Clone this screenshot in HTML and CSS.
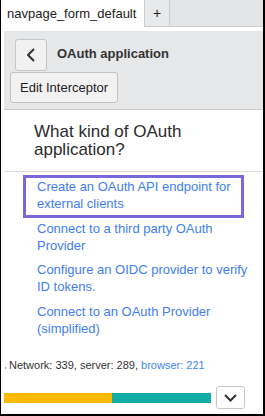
FILE: index.html
```html
<!DOCTYPE html>
<html lang="en">
<head>
  <meta charset="UTF-8" />
  <meta name="viewport" content="width=device-width, initial-scale=1" />
  <title>navpage_form_default</title>
  <link rel="stylesheet" href="styles.css">
</head>
<body>
  <div class="frame">
    <div class="tabs">
      <div class="tab active">navpage_form_default</div>
      <div class="tab add">+</div>
    </div>

    <div class="main">
      <div class="toolbar">
        <div class="toolbar-row">
          <button class="back-btn" aria-label="Back">
            <svg width="8" height="14" viewBox="0 0 8 14"><polyline points="7,1 1,7 7,13" fill="none" stroke="#333" stroke-width="2"/></svg>
          </button>
          <span class="page-title">OAuth application</span>
        </div>
        <button class="edit-btn">Edit Interceptor</button>
      </div>

      <h2 class="question">What kind of OAuth application?</h2>

      <ul class="options">
        <li class="opt focused">Create an OAuth API endpoint for external clients</li>
        <li class="opt">Connect to a third party OAuth Provider</li>
        <li class="opt">Configure an OIDC provider to verify ID tokens.</li>
        <li class="opt">Connect to an OAuth Provider (simplified)</li>
      </ul>

      <p class="timing"><span class="dot"></span>Network: 339, server: 289, <span class="browser">browser: 221</span></p>

      <div class="bar-row">
        <div class="bar">
          <div class="bar-server" style="width: 108px"></div>
        </div>
        <button class="more-btn" aria-label="More">
          <svg width="13" height="8" viewBox="0 0 13 8"><polyline points="1,1 6.5,6.5 12,1" fill="none" stroke="#333" stroke-width="2"/></svg>
        </button>
      </div>
    </div>
  </div>
</body>
</html>
```

FILE: styles.css
```css
* {
  box-sizing: border-box;
  margin: 0;
  padding: 0;
}

body {
  font-family: "Liberation Sans", Arial, sans-serif;
  color: #333;
  background: #fff;
}

.frame {
  width: 265px;
  height: 416px;
  border-left: 1px solid #000;
  border-right: 2px solid #000;
  border-bottom: 2px solid #000;
  overflow: hidden;
}

/* Tab strip */
.tabs {
  display: flex;
  height: 27px;
  background: #e3e4e6;
  border-bottom: 1px solid #cdcdcd;
}

.tab {
  font-size: 13px;
  line-height: 27px;
  height: 27px;
  border-right: 1px solid #cdcdcd;
}

.tab.active {
  width: 144px;
  padding-left: 6px;
  background: #fff;
  color: #222;
}

.tab.add {
  width: 25px;
  text-align: center;
  font-size: 14px;
  background: #e8e9eb;
  color: #222;
  height: 26px;
  line-height: 26px;
}

.main {
  margin-left: 3px;
  padding-top: 4px;
}

/* Grey toolbar */
.toolbar {
  background: #e6e7e9;
  border-bottom: 1px solid #cacaca;
  padding: 8px 0 6px 6px;
}

.toolbar-row {
  display: flex;
  align-items: center;
  gap: 10px;
}

button {
  font-family: inherit;
  cursor: pointer;
}

.back-btn {
  width: 32px;
  height: 32px;
  margin-left: 5px;
  background: #f1f1f2;
  border: 1px solid #c6c6c6;
  border-radius: 3px;
  display: flex;
  align-items: center;
  justify-content: center;
}

.page-title {
  font-size: 13px;
  font-weight: bold;
  color: #333;
  padding-bottom: 3px;
}

.edit-btn {
  margin-top: 1px;
  height: 31px;
  padding: 0 9px;
  font-size: 13px;
  color: #222;
  background: #f2f2f3;
  border: 1px solid #c3c3c3;
  border-radius: 3px;
}

/* Question */
.question {
  font-size: 17px;
  font-weight: normal;
  line-height: 18px;
  color: #2b2b2b;
  padding: 13px 40px 12px 30px;
  border-bottom: 1px solid #dcdcdc;
}

.options {
  list-style: none;
  margin-top: 3px;
}

.opt {
  position: relative;
  margin-left: 19px;
  padding: 3px 6px 4.5px 14px;
  font-size: 13px;
  line-height: 17px;
  color: #3f7df2;
  cursor: pointer;
}

.opt.focused::after {
  content: "";
  position: absolute;
  left: 0;
  top: 0;
  bottom: -1px;
  width: 215px;
  border: 3px solid #7769da;
}

/* Timing line */
.timing {
  margin-top: 17.5px;
  padding-left: 4px;
  font-size: 11px;
  line-height: 13px;
  color: #333;
}

.dot {
  display: inline-block;
  width: 1px;
  height: 2px;
  margin: 0 3px 0 -3px;
  background: #9a8fd8;
}

.browser {
  color: #3d86f3;
}

.bar-row {
  display: flex;
  align-items: center;
  gap: 5px;
  margin-top: 14.5px;
}

.bar {
  width: 207px;
  height: 10px;
  background: #14ada5;
}

.bar-server {
  height: 100%;
  background: #fbb900;
}

.more-btn {
  width: 29px;
  height: 23px;
  background: #fff;
  border: 1px solid #c6c6c6;
  border-radius: 3px;
  display: flex;
  align-items: center;
  justify-content: center;
}
```
